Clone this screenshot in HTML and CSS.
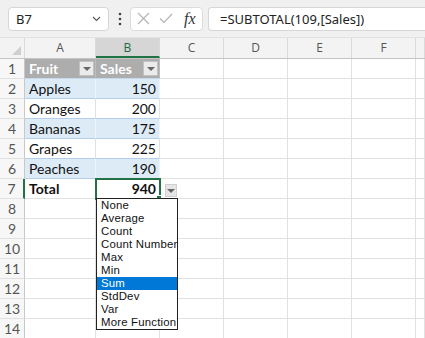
FILE: index.html
```html
<!DOCTYPE html>
<html lang="en">
<head>
  <meta charset="UTF-8" />
  <title>Table total row</title>
  <link rel="stylesheet" href="styles.css">
</head>
<body>
  <div class="toolbar">
    <div class="namebox">
      <span>B7</span>
      <svg class="chev" width="9" height="6" viewBox="0 0 9 6"><path d="M1 1 L4.5 4.5 L8 1" fill="none" stroke="#555" stroke-width="1.1"/></svg>
    </div>
    <svg class="dots" width="4" height="14" viewBox="0 0 4 14"><circle cx="2" cy="2" r="1.3" fill="#444"/><circle cx="2" cy="7" r="1.3" fill="#444"/><circle cx="2" cy="12" r="1.3" fill="#444"/></svg>
    <div class="fxbox">
      <svg width="13" height="13" viewBox="0 0 13 13"><path d="M1 1 L12 12 M12 1 L1 12" stroke="#b4b4b4" stroke-width="1.2"/></svg>
      <svg width="14" height="11" viewBox="0 0 14 11"><path d="M1 5.5 L5 9.5 L13 1" fill="none" stroke="#b4b4b4" stroke-width="1.2"/></svg>
      <span class="fx">fx</span>
    </div>
    <div class="formula">=SUBTOTAL(109,[Sales])</div>
  </div>

  <div class="sheet">
    <div class="row head">
      <div class="corner"><span class="tri"></span></div>
      <div class="col">A</div>
      <div class="col sel">B</div>
      <div class="col">C</div>
      <div class="col">D</div>
      <div class="col">E</div>
      <div class="col">F</div>
      <div class="col"></div>
    </div>

    <div class="row">
      <div class="rn">1</div>
      <div class="cell th">Fruit<span class="filter"></span></div>
      <div class="cell th">Sales<span class="filter"></span></div>
      <div class="cell"></div><div class="cell"></div><div class="cell"></div><div class="cell"></div><div class="cell"></div>
    </div>
    <div class="row">
      <div class="rn">2</div>
      <div class="cell band">Apples</div>
      <div class="cell band num">150</div>
      <div class="cell"></div><div class="cell"></div><div class="cell"></div><div class="cell"></div><div class="cell"></div>
    </div>
    <div class="row">
      <div class="rn">3</div>
      <div class="cell plain">Oranges</div>
      <div class="cell plain num">200</div>
      <div class="cell"></div><div class="cell"></div><div class="cell"></div><div class="cell"></div><div class="cell"></div>
    </div>
    <div class="row">
      <div class="rn">4</div>
      <div class="cell band">Bananas</div>
      <div class="cell band num">175</div>
      <div class="cell"></div><div class="cell"></div><div class="cell"></div><div class="cell"></div><div class="cell"></div>
    </div>
    <div class="row">
      <div class="rn">5</div>
      <div class="cell plain">Grapes</div>
      <div class="cell plain num">225</div>
      <div class="cell"></div><div class="cell"></div><div class="cell"></div><div class="cell"></div><div class="cell"></div>
    </div>
    <div class="row">
      <div class="rn">6</div>
      <div class="cell band">Peaches</div>
      <div class="cell band num">190</div>
      <div class="cell"></div><div class="cell"></div><div class="cell"></div><div class="cell"></div><div class="cell"></div>
    </div>
    <div class="row">
      <div class="rn selrow">7</div>
      <div class="cell total">Total</div>
      <div class="cell total num active">940
        <span class="listbtn"></span>
        <ul class="fnlist">
          <li>None</li>
          <li>Average</li>
          <li>Count</li>
          <li>Count Number</li>
          <li>Max</li>
          <li>Min</li>
          <li class="hl">Sum</li>
          <li>StdDev</li>
          <li>Var</li>
          <li>More Function</li>
        </ul>
      </div>
      <div class="cell"></div><div class="cell"></div><div class="cell"></div><div class="cell"></div><div class="cell"></div>
    </div>
    <div class="row"><div class="rn">8</div><div class="cell"></div><div class="cell"></div><div class="cell"></div><div class="cell"></div><div class="cell"></div><div class="cell"></div><div class="cell"></div></div>
    <div class="row"><div class="rn">9</div><div class="cell"></div><div class="cell"></div><div class="cell"></div><div class="cell"></div><div class="cell"></div><div class="cell"></div><div class="cell"></div></div>
    <div class="row"><div class="rn">10</div><div class="cell"></div><div class="cell"></div><div class="cell"></div><div class="cell"></div><div class="cell"></div><div class="cell"></div><div class="cell"></div></div>
    <div class="row"><div class="rn">11</div><div class="cell"></div><div class="cell"></div><div class="cell"></div><div class="cell"></div><div class="cell"></div><div class="cell"></div><div class="cell"></div></div>
    <div class="row"><div class="rn">12</div><div class="cell"></div><div class="cell"></div><div class="cell"></div><div class="cell"></div><div class="cell"></div><div class="cell"></div><div class="cell"></div></div>
    <div class="row"><div class="rn">13</div><div class="cell"></div><div class="cell"></div><div class="cell"></div><div class="cell"></div><div class="cell"></div><div class="cell"></div><div class="cell"></div></div>
    <div class="row"><div class="rn">14</div><div class="cell"></div><div class="cell"></div><div class="cell"></div><div class="cell"></div><div class="cell"></div><div class="cell"></div><div class="cell"></div></div>
  </div>
</body>
</html>
```

FILE: styles.css
```css
body {
  margin: 0;
  background: #fff;
  font-family: 'Lato', sans-serif;
  overflow: hidden;
}
.toolbar {
  height: 38px;
  box-sizing: border-box;
  background: #f0f0f0;
  border-bottom: 1px solid #e2e2e2;
  display: flex;
  align-items: center;
  padding-left: 8px;
}
.namebox {
  width: 101px;
  height: 24px;
  box-sizing: border-box;
  background: #fff;
  border: 1px solid #d6d6d6;
  border-radius: 4px;
  display: flex;
  align-items: center;
  justify-content: space-between;
  padding: 0 7px 0 7px;
  font-family: 'Noto Sans', sans-serif;
  font-size: 13px;
  color: #222;
}
.dots {
  margin-left: 9px;
}
.fxbox {
  margin-left: 8px;
  width: 73px;
  height: 24px;
  box-sizing: border-box;
  background: #fff;
  border: 1px solid #dcdcdc;
  border-radius: 4px;
  display: flex;
  align-items: center;
  padding-left: 6px;
  gap: 9px;
}
.fx {
  font-family: 'Liberation Serif', serif;
  font-style: italic;
  font-size: 16px;
  color: #333;
  margin-left: 2px;
}
.formula {
  margin-left: 5px;
  flex: 1;
  height: 24px;
  box-sizing: border-box;
  background: #fff;
  border: 1px solid #d6d6d6;
  border-right: none;
  border-radius: 4px 0 0 4px;
  padding-left: 11px;
  font-family: 'Noto Sans', sans-serif;
  font-size: 13px;
  line-height: 22px;
  color: #222;
}

.row {
  display: grid;
  grid-template-columns: 25px 71px 64px 64px 64px 64px 64px 1fr;
  height: 20px;
}
.row > div {
  box-sizing: border-box;
}
.head {
  background: #f3f3f3;
  border-bottom: 1px solid #c4c4c4;
}
.head .col {
  border-right: 1px solid #dadada;
  text-align: center;
  font-family: 'Open Sans', sans-serif;
  font-size: 12px;
  line-height: 19px;
  color: #555;
}
.head .sel {
  background: #d6d6d6;
  border-bottom: 2px solid #217346;
  color: #1d6b3f;
  height: 20px;
}
.corner {
  border-right: 1px solid #dadada;
  position: relative;
}
.tri {
  position: absolute;
  right: 3px;
  bottom: 3px;
  width: 0;
  height: 0;
  border-left: 9px solid transparent;
  border-bottom: 9px solid #cfcfcf;
}
.rn {
  background: #f7f7f7;
  border-right: 1px solid #c8c8c8;
  border-bottom: 1px solid #e1e1e1;
  text-align: center;
  font-size: 14px;
  line-height: 19px;
  color: #555;
}
.selrow {
  border-right: 2px solid #217346;
}
.cell {
  border-right: 1px solid #e1e1e1;
  border-bottom: 1px solid #e1e1e1;
  padding: 0 3px 0 4px;
  font-size: 14px;
  line-height: 19px;
  color: #111;
  white-space: nowrap;
}
.num {
  text-align: right;
}
.th {
  background: #adadad;
  color: #fff;
  font-weight: bold;
  display: flex;
  align-items: center;
  justify-content: space-between;
  padding-right: 1px;
  border-right-color: #bdbdbd;
  border-bottom-color: #c6d9ee;
}
.filter {
  width: 15px;
  height: 15px;
  box-sizing: border-box;
  background: #ebebeb;
  border: 1px solid #c2c2c2;
  position: relative;
}
.filter::after, .listbtn::after {
  content: "";
  position: absolute;
  left: 3px;
  top: 5px;
  border-left: 4px solid transparent;
  border-right: 4px solid transparent;
  border-top: 4px solid #666;
}
.band {
  background: #ddebf7;
  border-bottom-color: #b4cfea;
  border-right-color: #eef4fb;
}
.plain {
  border-bottom-color: #b4cfea;
}
.total {
  font-weight: bold;
}
.active {
  position: relative;
  outline: 2px solid #217346;
  outline-offset: -1px;
}
.active::after {
  content: "";
  position: absolute;
  right: -3px;
  bottom: -3px;
  width: 4px;
  height: 4px;
  background: #217346;
  border: 1px solid #fff;
}
.listbtn {
  position: absolute;
  left: 69px;
  top: 5px;
  width: 12px;
  height: 13px;
  box-sizing: border-box;
  background: #e6e6e6;
  border: 1px solid #d0d0d0;
}
.listbtn::after {
  left: 1px;
  top: 4px;
}
.fnlist {
  position: absolute;
  left: 0;
  top: 19px;
  width: 82px;
  margin: 0;
  padding: 0;
  list-style: none;
  background: #fff;
  border: 1px solid #222;
  box-sizing: border-box;
  text-align: left;
  font-family: 'Liberation Sans', sans-serif;
  font-weight: normal;
  font-size: 11.4px;
  letter-spacing: 0.2px;
  line-height: 13px;
  color: #111;
  overflow: hidden;
  z-index: 2;
}
.fnlist li {
  padding-left: 4px;
  height: 13px;
  white-space: nowrap;
}
.fnlist .hl {
  background: #0078d7;
  color: #fff;
}
```
